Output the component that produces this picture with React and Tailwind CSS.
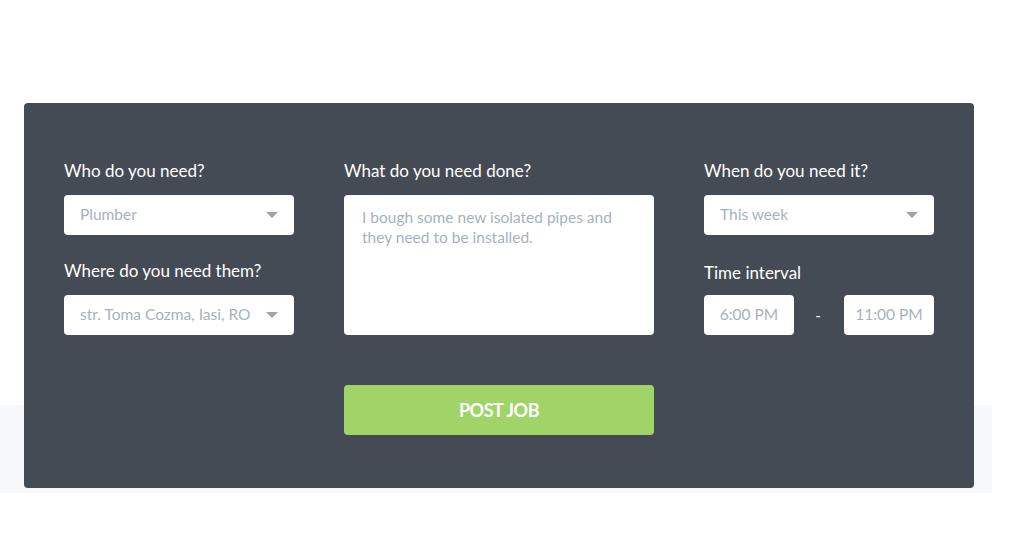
const Caret = () => (
    <svg width="12" height="6" viewBox="0 0 12 6" className="shrink-0">
        <path d="M0 0 L12 0 L6 6 Z" fill="#9ba4b0" />
    </svg>
);

const Label = ({ children, className = '' }) => (
    <p className={`text-[17px] leading-6 text-white ${className}`}>{children}</p>
);

const Select = ({ value }) => (
    <div className="h-10 w-full bg-white rounded flex items-center justify-between pl-4 pr-4">
        <span className="text-[15.5px] text-[#a9b1be] truncate">{value}</span>
        <Caret />
    </div>
);

const TimeBox = ({ value }) => (
    <div className="h-10 w-[90px] bg-white rounded flex items-center justify-center">
        <span className="text-[15.5px] text-[#a9b1be]">{value}</span>
    </div>
);

export default function App() {
    return (
        <div className="min-h-[547px] bg-white font-['Lato',sans-serif]">
            <div className="pt-[103px] pl-6 w-[974px]">
                {/* Job form panel */}
                <div className="relative z-10 bg-[#454b55] rounded pt-14 pb-[53px] px-10">
                    <div className="flex gap-[50px]">
                        <div className="w-[230px] shrink-0">
                            <Label className="mb-3">Who do you need?</Label>
                            <Select value="Plumber" />
                            <Label className="mt-6 mb-3">Where do you need them?</Label>
                            <Select value="str. Toma Cozma, Iasi, RO" />
                        </div>
                        <div className="w-[310px] shrink-0">
                            <Label className="mb-3">What do you need done?</Label>
                            <div className="h-[140px] bg-white rounded px-[18px] pt-[12px]">
                                <p className="text-[15.5px] leading-5 text-[#a9b1be]">
                                    I bough some new isolated pipes and they need to be installed.
                                </p>
                            </div>
                        </div>
                        <div className="w-[230px] shrink-0">
                            <Label className="mb-3">When do you need it?</Label>
                            <Select value="This week" />
                            <Label className="mt-[26px] mb-[10px]">Time interval</Label>
                            <div className="flex items-center justify-between">
                                <TimeBox value="6:00 PM" />
                                <span className="text-white text-[15px] -ml-[2px]">-</span>
                                <TimeBox value="11:00 PM" />
                            </div>
                        </div>
                    </div>
                    <div className="mt-[50px] ml-[280px] w-[310px]">
                        <button className="w-full h-[50px] bg-[#a0d468] rounded text-white text-[18px] font-bold tracking-tight">
                            POST JOB
                        </button>
                    </div>
                </div>
            </div>
            <div className="-mt-[83px] h-[88px] w-[992px] bg-[#f7f8fa]" />
        </div>
    );
}
